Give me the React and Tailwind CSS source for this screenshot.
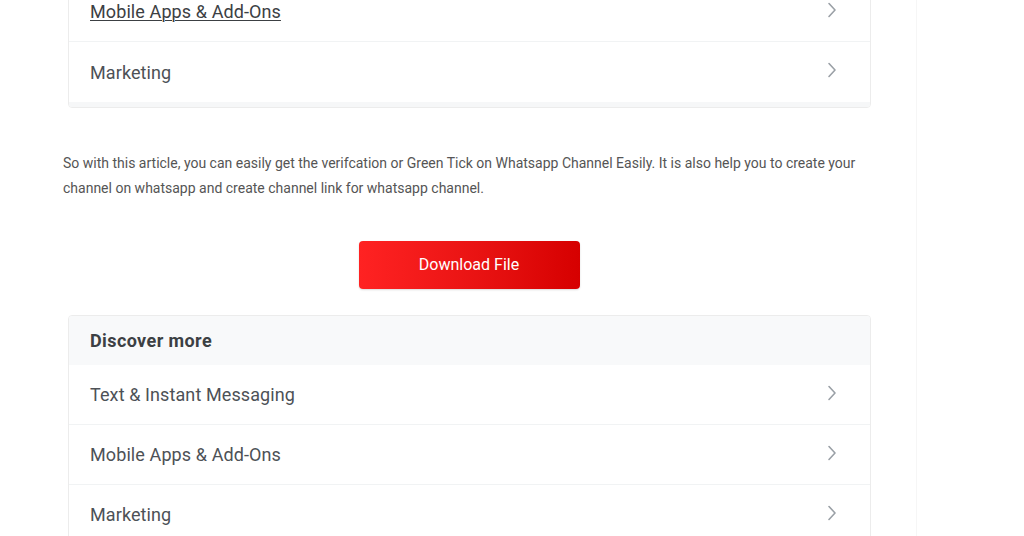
import React from 'react';

const TOP_ITEMS = [
  { label: 'Mobile Apps & Add-Ons', hover: true },
  { label: 'Marketing' }
];

const DISCOVER_ITEMS = [
  { label: 'Text & Instant Messaging' },
  { label: 'Mobile Apps & Add-Ons' },
  { label: 'Marketing' }
];

const Chevron = () => (
  <svg width="10" height="16" viewBox="0 0 10 16" fill="none" className="shrink-0 -mt-[4px]">
    <path d="M2 1.5 L8 8 L2 14.5" stroke="#9aa0a6" strokeWidth="1.6" strokeLinecap="round" strokeLinejoin="round" />
  </svg>
);

const Row = ({ label, hover, last }) => (
  <div
    className={`flex items-center justify-between h-[60px] pl-[21px] pr-[33px] ${
      last ? '' : 'border-b border-[#f1f3f4]'
    }`}
  >
    <span
      className={`text-[18px] tracking-[0.1px] ${
        hover ? 'text-[#3c4043] underline underline-offset-2 decoration-1' : 'text-[#4d5156]'
      }`}
    >
      {label}
    </span>
    <Chevron />
  </div>
);

export default function App() {
  return (
    <div className="w-[1024px] h-[536px] overflow-hidden bg-white font-['Roboto',sans-serif]">
      <div className="flex h-full">
        <div className="w-[917px] h-full border-r border-[#f6f6f6] pl-[63px] pr-[41px]">
          {/* related links card, cut off at top */}
          <div className="-mt-[19px] ml-[5px] w-[803px] rounded-[4px] border border-[#ececec] bg-white overflow-hidden">
            {TOP_ITEMS.map((item, i) => (
              <Row key={i} {...item} last={i === TOP_ITEMS.length - 1} />
            ))}
            <div className="h-[5px] bg-[#f6f7f8]" />
          </div>

          <p className="mt-[43px] w-[810px] text-[14px] leading-[25px] text-[#555555]">
            So with this article, you can easily get the verifcation or Green Tick on Whatsapp Channel Easily. It is also help you to create your channel on whatsapp and create channel link for whatsapp channel.
          </p>

          <div className="mt-[40px] flex justify-center">
            <button className="w-[221px] h-[48px] rounded-[4px] bg-gradient-to-r from-[#ff2222] to-[#d60000] text-white text-[16px] shadow-[0_1px_2px_rgba(0,0,0,0.15)]">
              Download File
            </button>
          </div>

          <div className="mt-[26px] ml-[5px] w-[803px] rounded-[4px] border border-[#ececec] bg-white overflow-hidden">
            <div className="h-[49px] flex items-center pl-[21px] bg-[#f8f9fa] text-[18px] font-bold tracking-[0.4px] text-[#3c4043]">
              Discover more
            </div>
            {DISCOVER_ITEMS.map((item, i) => (
              <Row key={i} {...item} last={false} />
            ))}
          </div>
        </div>
        <div className="flex-1" />
      </div>
    </div>
  );
}
